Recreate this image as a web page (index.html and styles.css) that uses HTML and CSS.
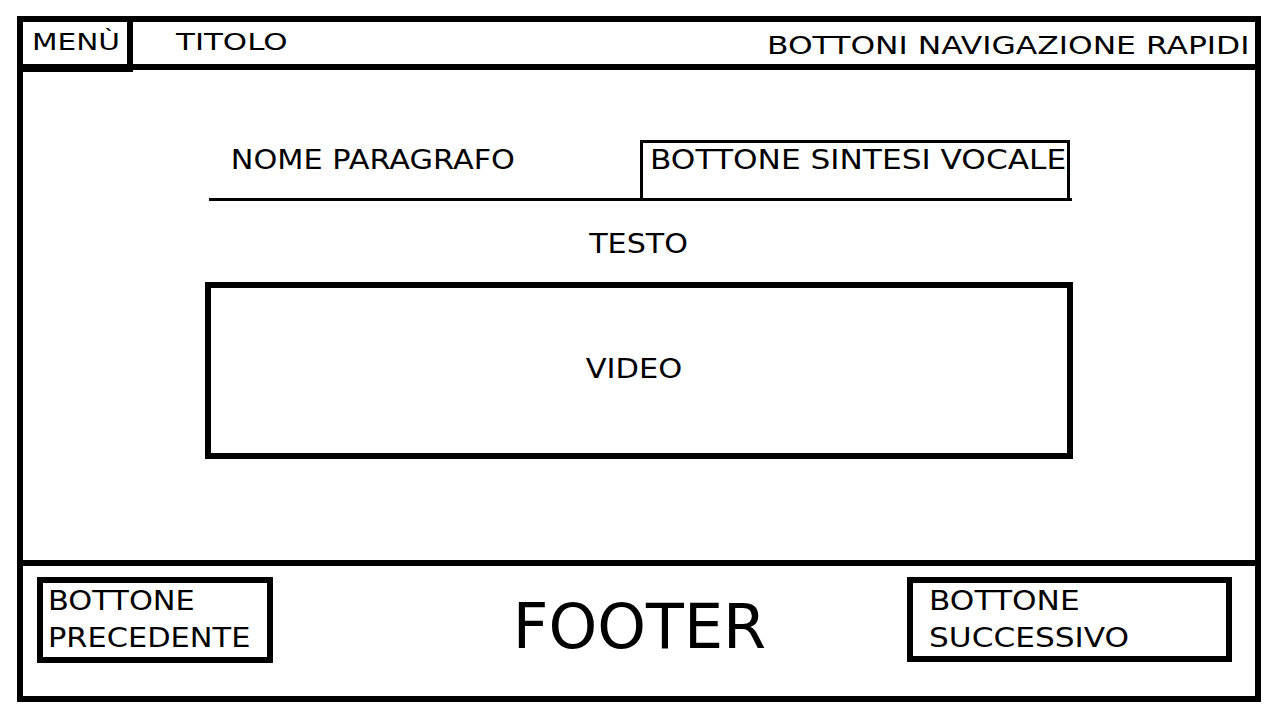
FILE: index.html
```html
<!DOCTYPE html>
<html lang="it">
<head>
    <meta charset="UTF-8">
    <meta name="viewport" content="width=device-width, initial-scale=1.0">
    <title>Wireframe - Paragrafo</title>
    <link rel="stylesheet" href="styles.css">
</head>
<body>
    <div class="frame">
        <header class="topbar">
            <div class="menu"><span class="menu-label">MENÙ</span></div>
            <span class="site-title">TITOLO</span>
            <span class="quick-nav">BOTTONI NAVIGAZIONE RAPIDI</span>
        </header>

        <main class="page">
            <section class="paragraph">
                <div class="paragraph-head">
                    <h2 class="paragraph-name">NOME PARAGRAFO</h2>
                    <div class="tts-button"><span class="tts-label">BOTTONE SINTESI VOCALE</span></div>
                </div>
                <p class="paragraph-text"><span class="text-label">TESTO</span></p>
                <div class="video-box"><span class="video-label">VIDEO</span></div>
            </section>
        </main>

        <footer class="footer">
            <div class="nav-button prev"><span class="nav-label">BOTTONE<br>PRECEDENTE</span></div>
            <div class="footer-label">FOOTER</div>
            <div class="nav-button next"><span class="nav-label">BOTTONE<br>SUCCESSIVO</span></div>
        </footer>
    </div>
</body>
</html>
```

FILE: styles.css
```css
body {
    margin: 0;
    background-color: #FFFFFF;
    color: #000000;
    font-family: 'DejaVu Sans', 'Liberation Sans', sans-serif;
}

.frame {
    box-sizing: border-box;
    width: 1244px;
    height: 686px;
    margin: 16px 0 0 17px;
    border: 6px solid #000;
    display: flex;
    flex-direction: column;
}

/* header */

.topbar {
    box-sizing: border-box;
    height: 48px;
    border-bottom: 6px solid #000;
    display: flex;
    align-items: flex-start;
    flex-shrink: 0;
}

.menu {
    box-sizing: border-box;
    width: 110px;
    height: 50px;
    border-right: 6px solid #000;
    border-bottom: 8px solid #000;
    display: flex;
    justify-content: center;
    padding: 6px 0 0 2px;
}

.menu-label {
    display: inline-block;
    font-size: 23.5px;
    line-height: 28px;
    transform: scaleX(1.26);
}

.site-title {
    display: inline-block;
    margin: 6px 0 0 43px;
    font-size: 23.5px;
    line-height: 28px;
    transform: scaleX(1.315);
    transform-origin: left center;
}

.quick-nav {
    display: inline-block;
    margin: 10px 6px 0 auto;
    font-size: 25px;
    line-height: 28px;
    white-space: nowrap;
    transform: scaleX(1.255);
    transform-origin: right center;
}

/* contenuto */

.page {
    flex: 1;
    padding-top: 70px;
}

.paragraph {
    width: 868px;
    margin: 0 auto;
}

.paragraph-head {
    display: flex;
    justify-content: space-between;
    align-items: flex-start;
    margin: 0 1px 0 4px;
    border-bottom: 3px solid #000;
}

.paragraph-name {
    margin: 0;
    padding: 5px 0 0 19px;
    font-size: 26.5px;
    font-weight: normal;
    line-height: 30px;
    white-space: nowrap;
    transform: scaleX(1.145);
    transform-origin: left center;
}

.tts-button {
    box-sizing: border-box;
    width: 430px;
    height: 58px;
    margin-right: 2px;
    border: 3px solid #000;
    border-bottom: none;
    padding: 2px 0 0 7px;
}

.tts-label {
    display: inline-block;
    font-size: 26px;
    line-height: 30px;
    white-space: nowrap;
    transform: scaleX(1.2);
    transform-origin: left center;
}

.paragraph-text {
    margin: 28px 0 0;
    text-align: center;
    font-size: 26px;
    line-height: 30px;
}

.text-label {
    display: inline-block;
    transform: scaleX(1.16);
}

.video-box {
    box-sizing: border-box;
    height: 177px;
    margin-top: 23px;
    border: 6px solid #000;
    display: flex;
    align-items: center;
    justify-content: center;
    padding: 0 11px 4px 0;
}

.video-label {
    display: inline-block;
    font-size: 26.5px;
    line-height: 30px;
    transform: scaleX(1.15);
}

/* footer */

.footer {
    box-sizing: border-box;
    height: 136px;
    flex-shrink: 0;
    border-top: 6px solid #000;
    display: grid;
    grid-template-columns: 1fr auto 1fr;
    align-items: start;
    padding: 11px 13px 0 14px;
}

.nav-button {
    box-sizing: border-box;
    border: 6px solid #000;
    font-size: 26px;
    line-height: 37px;
    white-space: nowrap;
}

.nav-button.prev {
    justify-self: start;
    width: 236px;
    height: 86px;
    padding-left: 5px;
}

.nav-button.next {
    justify-self: end;
    width: 325px;
    height: 85px;
    margin-right: 10px;
    padding-left: 16px;
}

.nav-label {
    display: inline-block;
    transform-origin: left center;
}

.prev .nav-label {
    transform: scaleX(1.17);
}

.next .nav-label {
    transform: scaleX(1.2);
}

.footer-label {
    margin-top: 14px;
    font-size: 62px;
    line-height: 72px;
}
```
